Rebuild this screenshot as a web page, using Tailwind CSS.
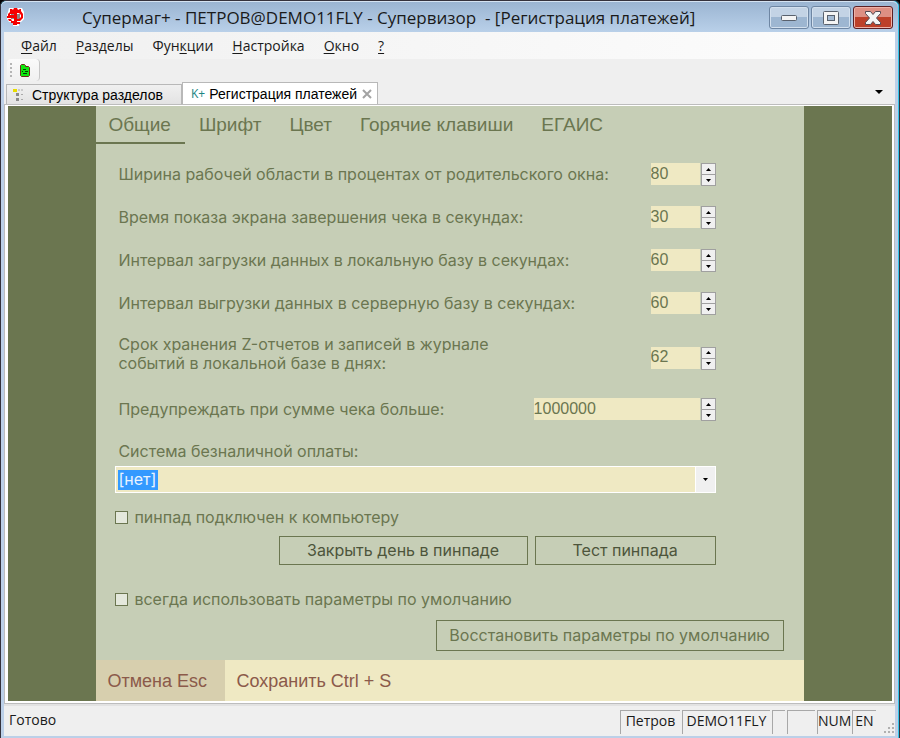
<!DOCTYPE html>
<html lang="ru">
    <head>
        <meta charset="UTF-8">
        <meta name="viewport" content="width=device-width, initial-scale=1">
        <title>Супермаг+ - Регистрация платежей</title>
        <script src="https://cdn.jsdelivr.net/npm/@tailwindcss/browser@4"></script>
    </head>
    <body class="bg-black font-['Open_Sans',sans-serif] text-[#1a1a1a]">
        <!-- окно -->
        <div class="min-h-screen flex flex-col border border-[#35323c] border-b-black bg-[#35c5ea] pr-px pb-px rounded-t-md">
            <div class="flex-1 flex flex-col bg-[#bcd0e8] px-[3px] pb-[2px] rounded-t-md">
                <!-- заголовок -->
                <header class="h-[31px] -mx-[3px] pl-[5px] pr-[5px] flex bg-linear-to-b from-[#9bb5d2] to-[#b9d0e9] rounded-t-md border-t border-[#d5e3f2]">
                    <svg class="w-5 h-5 mt-[5px]" viewBox="0 0 20 20">
                        <path d="M3 1h13l2 4v7l-3 3h-2v4H7v-4H3l-2-3V8l1-3z" fill="#fff"/>
                        <path d="M5 7h3v5H5zM11 7h3v5h-3z" fill="#8f8585"/>
                        <path d="M4 2h2l1 1 1-2h3l1 2 2-1h1v4h-4v12H7v-2H5v-2h3V5H4zM2 7l2-2h4v2H4v1h4v3H1V9h1zM2 12h3l1 2H3zM12 4h3l2 3v4l-3 3h-4v-2h3l2-2V8l-2-2h-1zM11 15h3v2h-3z" fill="#f50000"/>
                    </svg>
                    <h1 class="ml-[56px] mt-px flex-1 text-[17px] leading-[30px] whitespace-pre">Супермаг+ - ПЕТРОВ@DEMO11FLY - Супервизор  - [Регистрация платежей]</h1>
                    <div class="flex gap-[2px] mt-[4px]">
                        <button type="button" aria-label="Свернуть" class="w-10 h-[23px] flex items-center justify-center rounded-[3px] border border-[#6e86a3] shadow-[inset_0_0_0_1px_#d3e0ee] bg-linear-to-b from-[#c3d3e5] from-50% to-[#9db6d1] to-50%">
                            <svg class="w-[18px] h-[8px]" viewBox="0 0 18 8"><rect x="1.500" y="1.500" width="15" height="5" rx="1" fill="#f4f4f4" stroke="#59616d"/></svg>
                        </button>
                        <button type="button" aria-label="Развернуть" class="w-10 h-[23px] flex items-center justify-center rounded-[3px] border border-[#6e86a3] shadow-[inset_0_0_0_1px_#d3e0ee] bg-linear-to-b from-[#c3d3e5] from-50% to-[#9db6d1] to-50%">
                            <svg class="w-[18px] h-4" viewBox="0 0 18 16"><rect x="1.500" y="1.500" width="15" height="13" rx="1" fill="#f4f4f4" stroke="#59616d"/><rect x="5.500" y="5.500" width="7" height="5" fill="#a5bcd5" stroke="#59616d"/></svg>
                        </button>
                        <button type="button" aria-label="Закрыть" class="w-10 h-[23px] flex items-center justify-center rounded-[3px] border border-[#5c1f24] shadow-[inset_0_0_0_1px_#eeb2a8] bg-linear-to-b from-[#dd8f83] from-50% to-[#bd4029] to-50%">
                            <svg class="w-[18px] h-4" viewBox="0 0 18 16"><path d="M1.500 1.500h5L9 4.500l2.500-3h5v2L12.500 8l4 4.500v2h-5L9 11.500l-2.500 3h-5v-2l4-4.500-4-4.500z" fill="#f4f4f4" stroke="#554a52"/></svg>
                        </button>
                    </div>
                </header>

                <!-- меню -->
                <nav class="h-[27px] pl-[17px] flex items-center gap-[19px] text-sm leading-5 whitespace-nowrap bg-linear-to-r from-[#f0f0f0] to-[#fdfdfd]">
                    <a href="#"><span class="underline underline-offset-2">Ф</span>айл</a>
                    <a href="#"><span class="underline underline-offset-2">Р</span>азделы</a>
                    <a href="#">Фун<span class="underline underline-offset-2">к</span>ции</a>
                    <a href="#"><span class="underline underline-offset-2">Н</span>астройка</a>
                    <a href="#"><span class="underline underline-offset-2">О</span>кно</a>
                    <a href="#"><span class="underline underline-offset-2">?</span></a>
                </nav>

                <!-- панель инструментов -->
                <div class="h-[24px] bg-[#efefef] pl-[3px]">
                    <div class="w-[33px] h-[22px] flex items-center gap-[7px] pl-[3px] bg-linear-to-b from-[#fafafa] to-[#f0f0f0] border-r border-[#c6c6c6] rounded">
                        <span class="h-[14px] border-l-2 border-dotted border-[#b5b5b5]"></span>
                        <button type="button" aria-label="Регистрация">
                            <svg class="block w-3 h-[13px]" viewBox="0 0 12 13"><path d="M1.500 1.500l1-1h3l1 1v1h3l1 1v8l-1 1h-7l-1-1z" fill="#0fe80f" stroke="#6d2b1c"/><path d="M4 5.500h3M6 7.500h3M3 7.500h1M4 9.500h4" stroke="#053c05"/></svg>
                        </button>
                    </div>
                </div>

                <!-- вкладки окон -->
                <div class="h-[21px] bg-[#efefef] px-[2px] flex items-end font-['Liberation_Sans',sans-serif] text-sm text-black whitespace-nowrap">
                    <button type="button" class="w-[176px] h-5 flex items-center pl-[6px] gap-[7px] border border-b-0 border-[#b8b8b8] bg-linear-to-b from-[#f0f0f0] to-[#e3e3e3]">
                        <svg class="w-3 h-3" viewBox="0 0 12 12"><path d="M0 0h4v3H0z" fill="#e8dc00"/><path d="M5 1h6M8 5.500h3M8 10.500h3" stroke="#aaa" stroke-dasharray="2 1"/><path d="M3 4h3v3H3zM3 9h3v3H3z" fill="#8a8a8a"/></svg>
                        Структура разделов
                    </button>
                    <div class="w-[196px] h-[22px] flex items-center pl-[8px] gap-[4px] border border-b-0 border-[#b8b8b8] bg-white">
                        <span class="font-['Open_Sans',sans-serif] text-xs leading-4 text-[#1c8583]">K+</span>
                        <span class="flex-1">Регистрация платежей</span>
                        <button type="button" aria-label="Закрыть вкладку" class="mr-[5px]">
                            <svg class="block w-[10px] h-[10px]" viewBox="0 0 10 10"><path d="M1 1l8 8M9 1L1 9" stroke="#a3a3a3" stroke-width="2"/></svg>
                        </button>
                    </div>
                    <button type="button" aria-label="Список окон" class="ml-auto mr-[10px] mb-[10px]">
                        <svg class="block w-2 h-1" viewBox="0 0 8 4"><path d="M0 0h8L4 4z" fill="#000"/></svg>
                    </button>
                </div>

                <!-- рабочая область -->
                <main class="flex-1 flex flex-col border border-[#bdbdbd] bg-white pt-px pb-[2px] pl-[3px] pr-[2px] font-['Liberation_Sans',sans-serif] text-[#6b7650]">
                    <div class="flex-1 flex justify-center bg-[#6b7650]">
                        <form class="w-4/5 flex flex-col bg-[#c6ceb6]">
                            <div class="flex gap-[2px] text-[19px] leading-7 whitespace-nowrap">
                                <button type="button" class="pl-[12px] pr-[14px] pt-[5px] pb-[3px] border-b-2 border-[#6b7650]">Общие</button>
                                <button type="button" class="pl-[12px] pr-[14px] pt-[5px] pb-[3px] border-b-2 border-transparent">Шрифт</button>
                                <button type="button" class="pl-[12px] pr-[14px] pt-[5px] pb-[3px] border-b-2 border-transparent">Цвет</button>
                                <button type="button" class="pl-[12px] pr-[14px] pt-[5px] pb-[3px] border-b-2 border-transparent">Горячие клавиши</button>
                                <button type="button" class="pl-[12px] pr-[14px] pt-[5px] pb-[3px] border-b-2 border-transparent">ЕГАИС</button>
                            </div>

                            <div class="flex-1 pl-[19px] pr-5 pt-[19px] font-['Inter',sans-serif] text-base leading-[19px]">
                                <div class="pr-[68px]">
                                    <div class="flex flex-col gap-[20px] pl-[3px]">
                                        <div class="flex items-center justify-between">
                                            <label for="width">Ширина рабочей области в процентах от родительского окна:</label>
                                            <div class="flex gap-px">
                                                <input id="width" type="text" value="80" class="w-[49px] h-[22px] pb-px bg-[#efe9c3] font-['Liberation_Sans',sans-serif] outline-none">
                                                <div class="w-[15px] h-[23px] flex flex-col border border-[#a0a0a0] bg-[#f0f0f0] divide-y divide-[#a0a0a0]">
                                                    <button type="button" aria-label="Больше" class="flex-1 flex items-center justify-center"><svg class="w-[5px] h-[3px]" viewBox="0 0 5 3"><path d="M0 3L2.500 0L5 3z"/></svg></button>
                                                    <button type="button" aria-label="Меньше" class="flex-1 flex items-center justify-center"><svg class="w-[5px] h-[3px]" viewBox="0 0 5 3"><path d="M0 0L2.500 3L5 0z"/></svg></button>
                                                </div>
                                            </div>
                                        </div>
                                        <div class="flex items-center justify-between">
                                            <label for="screen">Время показа экрана завершения чека в секундах:</label>
                                            <div class="flex gap-px">
                                                <input id="screen" type="text" value="30" class="w-[49px] h-[22px] pb-px bg-[#efe9c3] font-['Liberation_Sans',sans-serif] outline-none">
                                                <div class="w-[15px] h-[23px] flex flex-col border border-[#a0a0a0] bg-[#f0f0f0] divide-y divide-[#a0a0a0]">
                                                    <button type="button" aria-label="Больше" class="flex-1 flex items-center justify-center"><svg class="w-[5px] h-[3px]" viewBox="0 0 5 3"><path d="M0 3L2.500 0L5 3z"/></svg></button>
                                                    <button type="button" aria-label="Меньше" class="flex-1 flex items-center justify-center"><svg class="w-[5px] h-[3px]" viewBox="0 0 5 3"><path d="M0 0L2.500 3L5 0z"/></svg></button>
                                                </div>
                                            </div>
                                        </div>
                                        <div class="flex items-center justify-between">
                                            <label for="load">Интервал загрузки данных в локальную базу в секундах:</label>
                                            <div class="flex gap-px">
                                                <input id="load" type="text" value="60" class="w-[49px] h-[22px] pb-px bg-[#efe9c3] font-['Liberation_Sans',sans-serif] outline-none">
                                                <div class="w-[15px] h-[23px] flex flex-col border border-[#a0a0a0] bg-[#f0f0f0] divide-y divide-[#a0a0a0]">
                                                    <button type="button" aria-label="Больше" class="flex-1 flex items-center justify-center"><svg class="w-[5px] h-[3px]" viewBox="0 0 5 3"><path d="M0 3L2.500 0L5 3z"/></svg></button>
                                                    <button type="button" aria-label="Меньше" class="flex-1 flex items-center justify-center"><svg class="w-[5px] h-[3px]" viewBox="0 0 5 3"><path d="M0 0L2.500 3L5 0z"/></svg></button>
                                                </div>
                                            </div>
                                        </div>
                                        <div class="flex items-center justify-between">
                                            <label for="unload">Интервал выгрузки данных в серверную базу в секундах:</label>
                                            <div class="flex gap-px">
                                                <input id="unload" type="text" value="60" class="w-[49px] h-[22px] pb-px bg-[#efe9c3] font-['Liberation_Sans',sans-serif] outline-none">
                                                <div class="w-[15px] h-[23px] flex flex-col border border-[#a0a0a0] bg-[#f0f0f0] divide-y divide-[#a0a0a0]">
                                                    <button type="button" aria-label="Больше" class="flex-1 flex items-center justify-center"><svg class="w-[5px] h-[3px]" viewBox="0 0 5 3"><path d="M0 3L2.500 0L5 3z"/></svg></button>
                                                    <button type="button" aria-label="Меньше" class="flex-1 flex items-center justify-center"><svg class="w-[5px] h-[3px]" viewBox="0 0 5 3"><path d="M0 0L2.500 3L5 0z"/></svg></button>
                                                </div>
                                            </div>
                                        </div>
                                        <div class="flex items-center justify-between">
                                            <label for="days">Срок хранения Z-отчетов и записей в журнале<br>событий в локальной базе в днях:</label>
                                            <div class="flex gap-px mt-2">
                                                <input id="days" type="text" value="62" class="w-[49px] h-[22px] pb-px bg-[#efe9c3] font-['Liberation_Sans',sans-serif] outline-none">
                                                <div class="w-[15px] h-[23px] flex flex-col border border-[#a0a0a0] bg-[#f0f0f0] divide-y divide-[#a0a0a0]">
                                                    <button type="button" aria-label="Больше" class="flex-1 flex items-center justify-center"><svg class="w-[5px] h-[3px]" viewBox="0 0 5 3"><path d="M0 3L2.500 0L5 3z"/></svg></button>
                                                    <button type="button" aria-label="Меньше" class="flex-1 flex items-center justify-center"><svg class="w-[5px] h-[3px]" viewBox="0 0 5 3"><path d="M0 0L2.500 3L5 0z"/></svg></button>
                                                </div>
                                            </div>
                                        </div>
                                        <div class="flex items-center justify-between pt-[5px] pb-px">
                                            <label for="sum">Предупреждать при сумме чека больше:</label>
                                            <div class="flex gap-px">
                                                <input id="sum" type="text" value="1000000" class="w-[166px] h-[22px] pb-px bg-[#efe9c3] font-['Liberation_Sans',sans-serif] outline-none">
                                                <div class="w-[15px] h-[23px] flex flex-col border border-[#a0a0a0] bg-[#f0f0f0] divide-y divide-[#a0a0a0]">
                                                    <button type="button" aria-label="Больше" class="flex-1 flex items-center justify-center"><svg class="w-[5px] h-[3px]" viewBox="0 0 5 3"><path d="M0 3L2.500 0L5 3z"/></svg></button>
                                                    <button type="button" aria-label="Меньше" class="flex-1 flex items-center justify-center"><svg class="w-[5px] h-[3px]" viewBox="0 0 5 3"><path d="M0 0L2.500 3L5 0z"/></svg></button>
                                                </div>
                                            </div>
                                        </div>
                                        <label for="system">Система безналичной оплаты:</label>
                                    </div>

                                    <div class="relative mt-[5px]">
                                        <!-- синяя подложка под выбранным значением -->
                                        <select id="system" class="block w-full h-[27px] pl-[2px] appearance-none border border-white bg-[#efe9c3] bg-[linear-gradient(#3399ff,#3399ff)] bg-[length:40px_20px] bg-[position:2px_center] bg-no-repeat text-[#eaf3ff] outline-none">
                                            <option>[нет]</option>
                                        </select>
                                        <span class="absolute inset-y-px right-px w-5 flex items-center justify-center bg-[#f0f0f0] border-l border-white pointer-events-none">
                                            <svg class="w-[5px] h-[3px]" viewBox="0 0 5 3"><path d="M0 0L2.500 3L5 0z"/></svg>
                                        </span>
                                    </div>

                                    <div class="flex items-center gap-[6px] mt-[15px]">
                                        <input id="pinpad" type="checkbox" class="w-[13px] h-[13px] appearance-none border border-[#6b7650] bg-[#e4e8dc]">
                                        <label for="pinpad">пинпад подключен к компьютеру</label>
                                    </div>
                                    <div class="flex justify-end gap-[7px] mt-[9px] text-[#4d553b]">
                                        <button type="button" class="w-[249px] h-[29px] border border-[#6b7650]">Закрыть день в пинпаде</button>
                                        <button type="button" class="w-[181px] h-[29px] border border-[#6b7650]">Тест пинпада</button>
                                    </div>
                                </div>

                                <div class="flex items-center gap-[6px] mt-[25px]">
                                    <input id="defaults" type="checkbox" class="w-[13px] h-[13px] appearance-none border border-[#6b7650] bg-[#e4e8dc]">
                                    <label for="defaults">всегда использовать параметры по умолчанию</label>
                                </div>
                                <div class="flex justify-end mt-[11px] mb-[9px]">
                                    <button type="button" class="w-[348px] h-[31px] border border-[#6b7650]">Восстановить параметры по умолчанию</button>
                                </div>
                            </div>

                            <div class="flex h-[41px] bg-[#efe9c3] text-lg text-[#8b5a4a]">
                                <button type="button" class="w-[129px] pl-[11px] text-left bg-[#d7cfae]">Отмена Esc</button>
                                <button type="button" class="px-[11px]">Сохранить Ctrl + S</button>
                            </div>
                        </form>
                    </div>
                </main>

                <!-- строка состояния -->
                <footer class="h-8 flex items-stretch pt-[4px] pb-[2px] pl-[5px] bg-[#efefef] border-t-2 border-[#e2e2e2] text-sm leading-5 whitespace-nowrap">
                    <span class="flex-1">Готово</span>
                    <div class="flex gap-[2px]">
                        <span class="w-[60px] text-center border-l border-t border-[#a8a8a8]">Петров</span>
                        <span class="w-[88px] text-center border-l border-t border-[#a8a8a8]">DEMO11FLY</span>
                        <span class="w-[13px] border-l border-t border-[#a8a8a8]"></span>
                        <span class="w-[28px] border-l border-t border-[#a8a8a8]"></span>
                        <span class="w-[33px] text-center border-l border-t border-[#a8a8a8]">NUM</span>
                        <span class="w-[24px] text-center border-l border-t border-[#a8a8a8]">EN</span>
                    </div>
                    <svg class="self-end ml-[8px] w-[11px] h-[11px]" viewBox="0 0 11 11"><path d="M8 0h2v2H8zM4 4h2v2H4zM8 4h2v2H8zM0 8h2v2H0zM4 8h2v2H4zM8 8h2v2H8z" fill="#b0b0b0"/></svg>
                </footer>
            </div>
        </div>
    </body>
</html>
